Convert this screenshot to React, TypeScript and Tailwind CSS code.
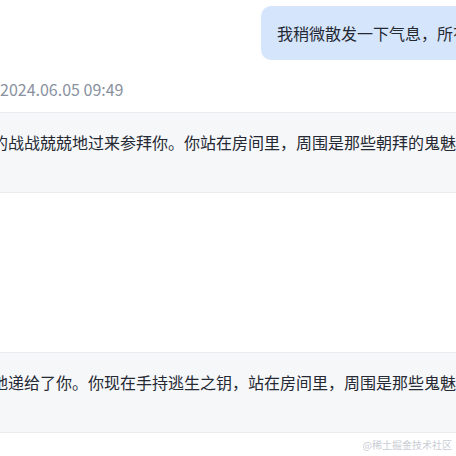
const cjk = "font-['Noto_Sans_CJK_SC','Noto_Sans',sans-serif]";

const ReplyBox = ({ text }: { text: string }) => {
  return (
    <section className="border-y border-[#e9ebef] bg-[#f6f7f9] pt-[17px] pb-[38px]">
      <p className={`-ml-[8px] whitespace-nowrap text-[16px] leading-[24px] text-[#252933] ${cjk}`}>
        {text}
      </p>
    </section>
  );
};

const App = () => {
  return (
    <main className="relative h-[456px] w-[456px] overflow-hidden bg-white">
      <div className="flex pl-[261px] pt-[6px]">
        <div
          className={`shrink-0 whitespace-nowrap rounded-[10px] bg-[#d5e5fb] px-4 py-[15px] text-[16px] leading-[24px] text-[#252933] ${cjk}`}
        >
          我稍微散发一下气息，所有的鬼魅都感到了恐惧
        </div>
      </div>
      <p className={`mt-[17px] text-[16px] leading-[24px] text-[#8a919f] ${cjk}`}>2024.06.05 09:49</p>
      <div className="mt-[11px]">
        <ReplyBox text="的战战兢兢地过来参拜你。你站在房间里，周围是那些朝拜的鬼魅。" />
      </div>
      <div className="mt-[159px]">
        <ReplyBox text="地递给了你。你现在手持逃生之钥，站在房间里，周围是那些鬼魅。" />
      </div>
      <span className={`absolute right-[4px] bottom-[4px] text-[10px] text-[#c9cdd4] ${cjk}`}>
        @稀土掘金技术社区
      </span>
    </main>
  );
};

export default App;
